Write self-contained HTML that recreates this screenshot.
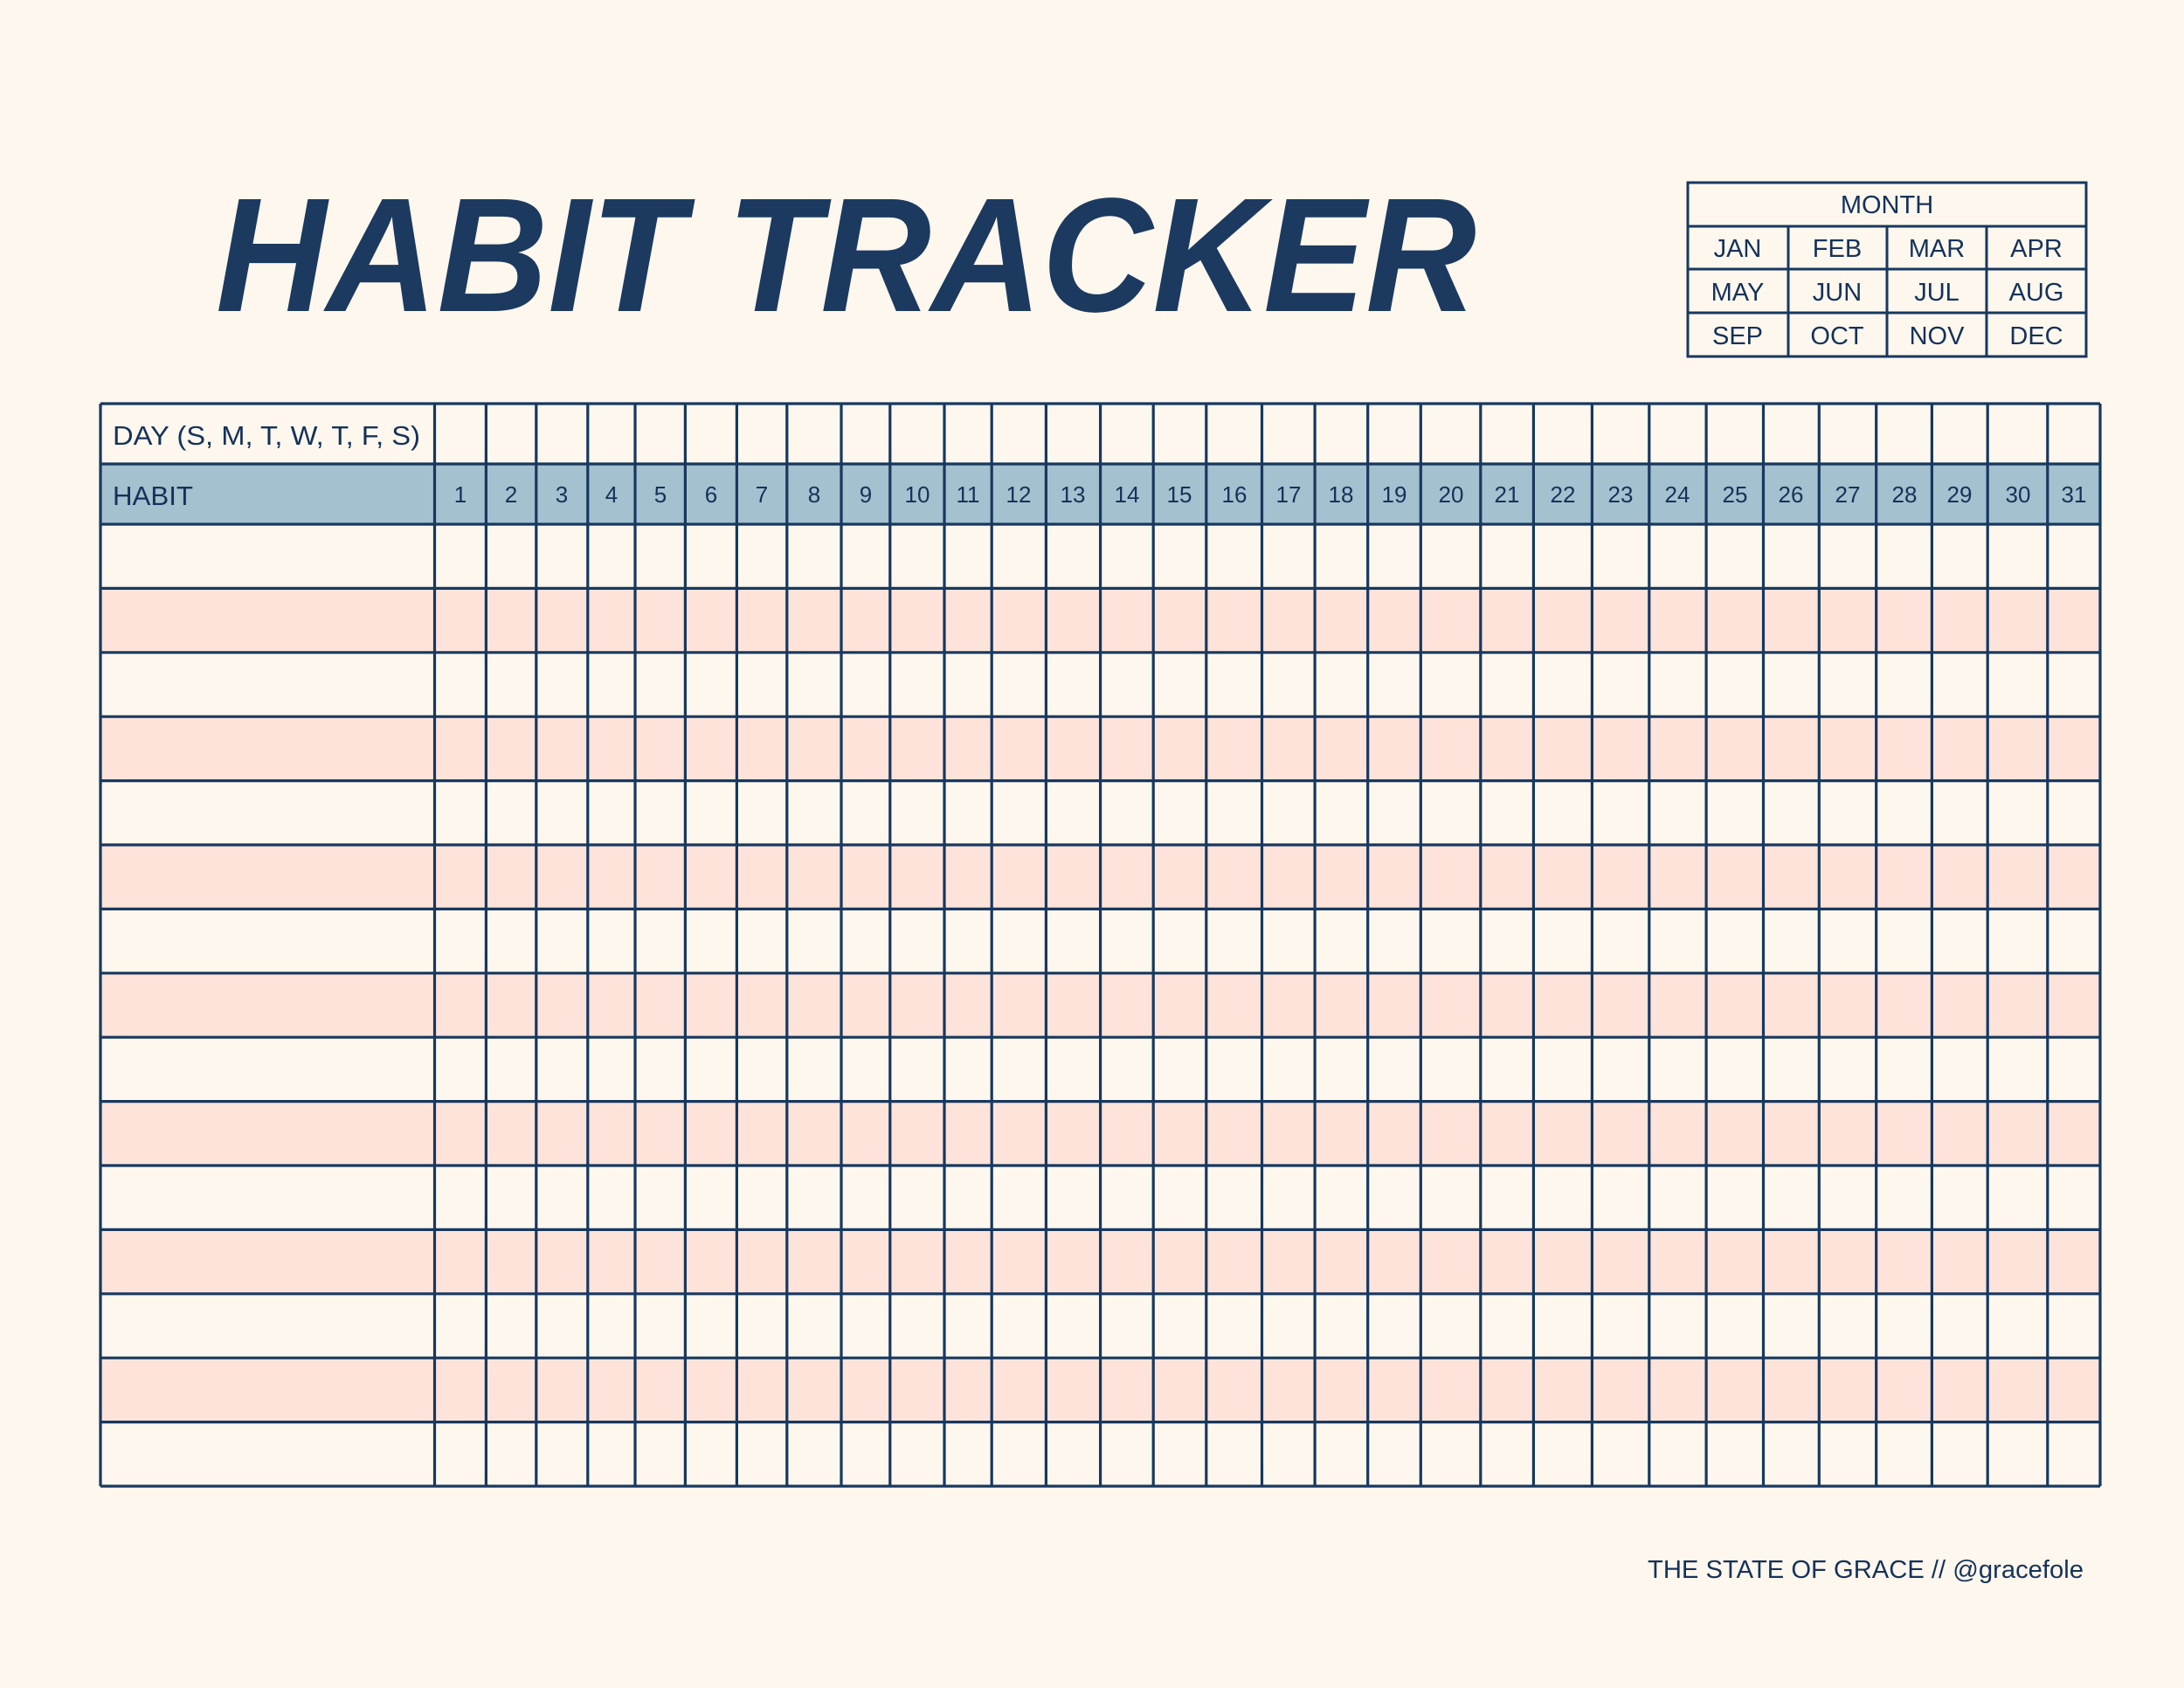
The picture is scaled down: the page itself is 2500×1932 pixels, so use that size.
<!DOCTYPE html>
<html><head><meta charset="utf-8"><style>
html,body{margin:0;padding:0;background:#fef7ee;}
svg{display:block}
text{font-family:"Liberation Sans",sans-serif;fill:#14325a}
</style></head><body>
<svg width="2500" height="1932" viewBox="0 0 2500 1932" xmlns="http://www.w3.org/2000/svg">
<rect width="2500" height="1932" fill="#fef7ee"/>
<text x="247" y="356" font-size="186" font-weight="bold" font-style="italic" textLength="1443" lengthAdjust="spacingAndGlyphs" style="fill:#1c3a60">HABIT TRACKER</text>

<g stroke="#17385f" stroke-width="3" fill="none">
<rect x="1932" y="209" width="456" height="199"/>
<line x1="1932" y1="259" x2="2388" y2="259"/>
<line x1="1932" y1="308" x2="2388" y2="308"/>
<line x1="1932" y1="358" x2="2388" y2="358"/>
<line x1="2047" y1="259" x2="2047" y2="408"/>
<line x1="2160" y1="259" x2="2160" y2="408"/>
<line x1="2274" y1="259" x2="2274" y2="408"/>
</g>
<g font-size="29" text-anchor="middle">
<text x="2160" y="244">MONTH</text>
<text x="1989" y="294">JAN</text><text x="2103" y="294">FEB</text><text x="2217" y="294">MAR</text><text x="2331" y="294">APR</text>
<text x="1989" y="344">MAY</text><text x="2103" y="344">JUN</text><text x="2217" y="344">JUL</text><text x="2331" y="344">AUG</text>
<text x="1989" y="394">SEP</text><text x="2103" y="394">OCT</text><text x="2217" y="394">NOV</text><text x="2331" y="394">DEC</text>
</g>

<rect x="115" y="531" width="2289" height="69" fill="#a3c1ce"/>
<g fill="#fde3da">
<rect x="115" y="673.4" width="2289" height="73.4"/>
<rect x="115" y="820.2" width="2289" height="73.4"/>
<rect x="115" y="967" width="2289" height="73.4"/>
<rect x="115" y="1113.8" width="2289" height="73.4"/>
<rect x="115" y="1260.6" width="2289" height="73.4"/>
<rect x="115" y="1407.4" width="2289" height="73.4"/>
<rect x="115" y="1554.2" width="2289" height="73.4"/>
</g>

<g stroke="#17385f" stroke-width="3.2">
<line x1="115" y1="462" x2="2404" y2="462"/>
<line x1="115" y1="531" x2="2404" y2="531"/>
<line x1="115" y1="600" x2="2404" y2="600"/>
<line x1="115" y1="673.4" x2="2404" y2="673.4"/>
<line x1="115" y1="746.8" x2="2404" y2="746.8"/>
<line x1="115" y1="820.2" x2="2404" y2="820.2"/>
<line x1="115" y1="893.6" x2="2404" y2="893.6"/>
<line x1="115" y1="967" x2="2404" y2="967"/>
<line x1="115" y1="1040.4" x2="2404" y2="1040.4"/>
<line x1="115" y1="1113.8" x2="2404" y2="1113.8"/>
<line x1="115" y1="1187.2" x2="2404" y2="1187.2"/>
<line x1="115" y1="1260.6" x2="2404" y2="1260.6"/>
<line x1="115" y1="1334" x2="2404" y2="1334"/>
<line x1="115" y1="1407.4" x2="2404" y2="1407.4"/>
<line x1="115" y1="1480.8" x2="2404" y2="1480.8"/>
<line x1="115" y1="1554.2" x2="2404" y2="1554.2"/>
<line x1="115" y1="1627.6" x2="2404" y2="1627.6"/>
<line x1="115" y1="1701" x2="2404" y2="1701"/>
<line x1="115" y1="462" x2="115" y2="1701"/>
<line x1="497.5" y1="462" x2="497.5" y2="1701"/>
<line x1="556.4" y1="462" x2="556.4" y2="1701"/>
<line x1="613.8" y1="462" x2="613.8" y2="1701"/>
<line x1="672.8" y1="462" x2="672.8" y2="1701"/>
<line x1="727" y1="462" x2="727" y2="1701"/>
<line x1="784.4" y1="462" x2="784.4" y2="1701"/>
<line x1="843.4" y1="462" x2="843.4" y2="1701"/>
<line x1="900.8" y1="462" x2="900.8" y2="1701"/>
<line x1="963" y1="462" x2="963" y2="1701"/>
<line x1="1018.8" y1="462" x2="1018.8" y2="1701"/>
<line x1="1081" y1="462" x2="1081" y2="1701"/>
<line x1="1135.2" y1="462" x2="1135.2" y2="1701"/>
<line x1="1197.4" y1="462" x2="1197.4" y2="1701"/>
<line x1="1259.6" y1="462" x2="1259.6" y2="1701"/>
<line x1="1320.2" y1="462" x2="1320.2" y2="1701"/>
<line x1="1380.8" y1="462" x2="1380.8" y2="1701"/>
<line x1="1444.5" y1="462" x2="1444.5" y2="1701"/>
<line x1="1505.1" y1="462" x2="1505.1" y2="1701"/>
<line x1="1565.7" y1="462" x2="1565.7" y2="1701"/>
<line x1="1626.3" y1="462" x2="1626.3" y2="1701"/>
<line x1="1694.8" y1="462" x2="1694.8" y2="1701"/>
<line x1="1755.4" y1="462" x2="1755.4" y2="1701"/>
<line x1="1822.4" y1="462" x2="1822.4" y2="1701"/>
<line x1="1887.8" y1="462" x2="1887.8" y2="1701"/>
<line x1="1953.1" y1="462" x2="1953.1" y2="1701"/>
<line x1="2018.5" y1="462" x2="2018.5" y2="1701"/>
<line x1="2082.3" y1="462" x2="2082.3" y2="1701"/>
<line x1="2147.7" y1="462" x2="2147.7" y2="1701"/>
<line x1="2211.4" y1="462" x2="2211.4" y2="1701"/>
<line x1="2275.2" y1="462" x2="2275.2" y2="1701"/>
<line x1="2343.8" y1="462" x2="2343.8" y2="1701"/>
<line x1="2404" y1="462" x2="2404" y2="1701"/>
</g>

<text x="129" y="509" font-size="31" textLength="352" lengthAdjust="spacingAndGlyphs">DAY (S, M, T, W, T, F, S)</text>
<text x="129" y="578" font-size="31" textLength="92" lengthAdjust="spacingAndGlyphs">HABIT</text>

<g font-size="26" text-anchor="middle">
<text x="527" y="575">1</text><text x="585" y="575">2</text><text x="643" y="575">3</text><text x="700" y="575">4</text>
<text x="756" y="575">5</text><text x="814" y="575">6</text><text x="872" y="575">7</text><text x="932" y="575">8</text>
<text x="991" y="575">9</text><text x="1050" y="575">10</text><text x="1108" y="575">11</text><text x="1166" y="575">12</text>
<text x="1228" y="575">13</text><text x="1290" y="575">14</text><text x="1350" y="575">15</text><text x="1413" y="575">16</text>
<text x="1475" y="575">17</text><text x="1535" y="575">18</text><text x="1596" y="575">19</text><text x="1661" y="575">20</text>
<text x="1725" y="575">21</text><text x="1789" y="575">22</text><text x="1855" y="575">23</text><text x="1920" y="575">24</text>
<text x="1986" y="575">25</text><text x="2050" y="575">26</text><text x="2115" y="575">27</text><text x="2180" y="575">28</text>
<text x="2243" y="575">29</text><text x="2310" y="575">30</text><text x="2374" y="575">31</text>
</g>

<text x="1886" y="1806" font-size="29" textLength="499" lengthAdjust="spacingAndGlyphs">THE STATE OF GRACE // @gracefole</text>
</svg>
</body></html>
